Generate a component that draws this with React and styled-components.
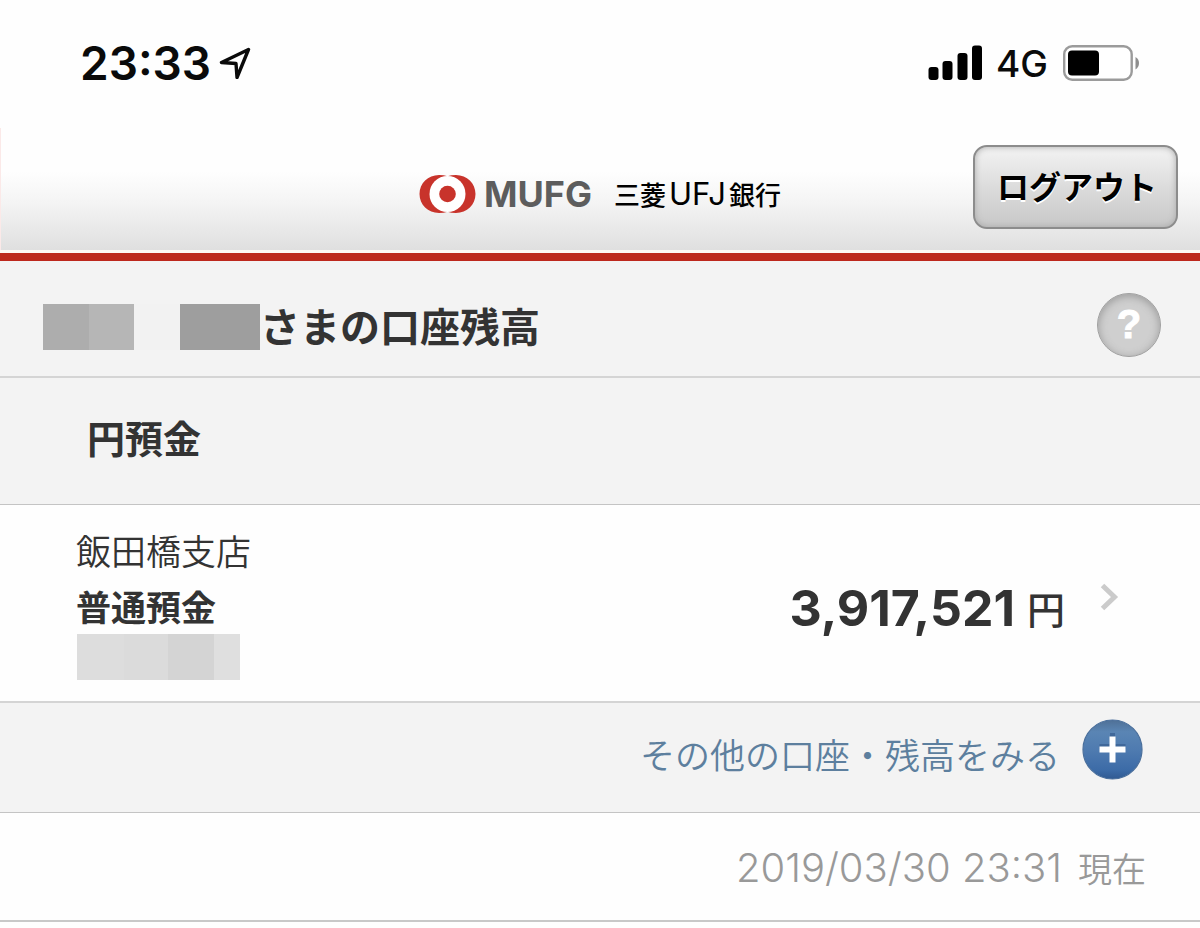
import React from 'react';
import styled, { createGlobalStyle } from 'styled-components';

const App = () => (
  <>
    <GlobalStyle />
    <StatusBar>
      <Clock>
        <Time>23:33</Time>
        <LocationIcon />
      </Clock>
      <Indicators>
        <SignalIcon />
        <Network>4G</Network>
        <BatteryIcon />
      </Indicators>
    </StatusBar>
    <Header>
      <Brand href="#">
        <LogoMark />
        <LogoName>MUFG</LogoName>
        <BankName>
          三菱<Latin>UFJ</Latin>銀行
        </BankName>
      </Brand>
      <LogoutArea>
        <LogoutButton type="button">ログアウト</LogoutButton>
      </LogoutArea>
    </Header>
    <main>
      <TitleRow>
        <Title>
          <MaskedName>
            <Block $width={46} $color="#adadad" />
            <Block $width={45} $color="#b6b6b6" />
            <Block $width={46} $color="#f2f2f2" />
            <Block $width={80} $color="#9e9e9e" />
          </MaskedName>
          さまの口座残高
        </Title>
        <HelpButton type="button" aria-label="ヘルプ">
          ?
        </HelpButton>
      </TitleRow>
      <SectionRow>
        <SectionTitle>円預金</SectionTitle>
      </SectionRow>
      <AccountLink href="#">
        <AccountInfo>
          <Branch>飯田橋支店</Branch>
          <AccountType>普通預金</AccountType>
          <MaskedNumber>
            <Block $width={47} $color="#dddddd" />
            <Block $width={44} $color="#dbdbdb" />
            <Block $width={46} $color="#d4d4d4" />
            <Block $width={26} $color="#dfdfdf" />
          </MaskedNumber>
        </AccountInfo>
        <Balance>
          <Amount>3,917,521</Amount>
          <Unit>円</Unit>
        </Balance>
        <ChevronIcon />
      </AccountLink>
      <MoreRow>
        <MoreLink href="#">
          <MoreLabel>その他の口座・残高をみる</MoreLabel>
          <PlusIcon />
        </MoreLink>
      </MoreRow>
      <DateRow>
        <DateTime>2019/03/30 23:31</DateTime>
        <DateSuffix>現在</DateSuffix>
      </DateRow>
    </main>
  </>
);

export default App;

const LocationIcon = () => (
  <svg width="32" height="32" viewBox="0 0 32 32" aria-hidden="true">
    <path
      d="M29.5 2.5 2.5 15.5 17 16.5 18 30.5Z"
      fill="none"
      stroke="#0a0a0a"
      strokeWidth="3.4"
      strokeLinejoin="round"
    />
  </svg>
);

const SignalIcon = () => (
  <svg width="54" height="36" viewBox="0 0 54 36" aria-hidden="true">
    <rect x="0.5" y="22" width="10" height="13" rx="3" />
    <rect x="14.5" y="16" width="10" height="19" rx="3" />
    <rect x="29.5" y="8" width="10" height="27" rx="3" />
    <rect x="44" y="0.5" width="10" height="34.5" rx="3" />
  </svg>
);

const BatteryIcon = () => (
  <svg width="78" height="36" viewBox="0 0 78 36" aria-hidden="true">
    <rect x="2.2" y="1.2" width="67.5" height="33.5" rx="8" fill="#fff" stroke="#9b9b9b" strokeWidth="2.4" />
    <rect x="6" y="5.5" width="31" height="25" rx="4" fill="#000" />
    <path d="M73.5 12Q77 14 77 18T73.5 24.5Z" fill="#8e8e8e" />
  </svg>
);

const LogoMark = () => (
  <svg width="58" height="40" viewBox="0 0 58 40" aria-hidden="true">
    <path
      d="M20 1Q25 1 28.5 2.2Q32 1 37 1C48 1 56.5 9.5 56.5 20S48 39 37 39Q32 39 28.5 37.8Q25 39 20 39C9 39 0.5 30.5 0.5 20S9 1 20 1Z"
      fill="#c8332b"
    />
    <circle cx="28.5" cy="20" r="18" fill="#fff" />
    <circle cx="28.5" cy="20" r="8.3" fill="#c8332b" />
  </svg>
);

const ChevronIcon = () => (
  <svg width="20" height="36" viewBox="0 0 20 36" aria-hidden="true">
    <path d="M2.5 2.5 14.5 14 2.5 25.5" fill="none" stroke="#cbcbcb" strokeWidth="5" />
  </svg>
);

const PlusIcon = () => (
  <svg width="62" height="62" viewBox="0 0 62 62" aria-hidden="true">
    <defs>
      <linearGradient id="plusFill" x1="0" y1="0" x2="0" y2="1">
        <stop offset="0" stopColor="#4f7096" />
        <stop offset="0.2" stopColor="#5a85b4" />
        <stop offset="0.5" stopColor="#4f7bb0" />
        <stop offset="0.85" stopColor="#3c6ba7" />
        <stop offset="1" stopColor="#305a92" />
      </linearGradient>
    </defs>
    <circle cx="30.5" cy="30.5" r="29.5" fill="url(#plusFill)" stroke="#4a6f9c" strokeWidth="1.2" />
    <path d="M17.5 27.5H43.5M30.5 14V40" stroke="#40689a" strokeWidth="5" />
    <path d="M17.5 30.5H43.5M30.5 17.5V43.5" stroke="#fff" strokeWidth="6" />
  </svg>
);

const GlobalStyle = createGlobalStyle`
  * {
    box-sizing: border-box;
  }

  body {
    margin: 0;
    background-color: #fefefe;
    color: #333;
    font-family: 'Noto Sans CJK JP', sans-serif;
  }
`;

const StatusBar = styled.div`
  display: flex;
  align-items: center;
  justify-content: space-between;
  height: 128px;
  padding: 0 60px 2px 80px;
  color: #0a0a0a;
  font-family: Inter, sans-serif;
`;

const Clock = styled.div`
  display: flex;
  align-items: center;
  gap: 8px;
`;

const Time = styled.span`
  font-size: 46px;
  font-weight: 600;
`;

const Indicators = styled.div`
  display: flex;
  align-items: center;
  gap: 14px;
`;

const Network = styled.span`
  font-size: 37px;
  font-weight: 500;
`;

const Header = styled.header`
  display: grid;
  grid-template-columns: 1fr auto 1fr;
  align-items: center;
  height: 133px;
  padding: 0 22px;
  background: linear-gradient(#fefefe 35%, #f4f4f4 60%, #dedede) padding-box;
  border-bottom: 8px solid #bd281d;
  box-shadow: inset 0 -3px #fdf7f5, inset 1px 0 #fbe9e8;
`;

const Brand = styled.a`
  grid-column: 2;
  display: flex;
  align-items: center;
  padding-top: 6px;
  color: #000;
  text-decoration: none;
`;

const LogoName = styled.span`
  margin: 0 22px 0 7px;
  color: #5d5d5d;
  font-family: Inter, sans-serif;
  font-size: 36px;
  font-weight: 700;
`;

const BankName = styled.span`
  font-size: 26px;
  font-weight: 500;
  line-height: 36px;
`;

const Latin = styled.span`
  padding: 0 3px;
  font-family: Inter, sans-serif;
  font-size: 31px;
  font-weight: 400;
`;

const LogoutArea = styled.div`
  justify-self: end;
  padding-bottom: 8px;
`;

const LogoutButton = styled.button`
  height: 84px;
  padding: 0 19px 4px 22px;
  background: linear-gradient(#f3f3f3, #dcdcdc 50%, #c8c8c8);
  border: 2px solid #8c8c8c;
  border-radius: 14px;
  box-shadow: inset 0 0 6px #a8a8a8;
  color: #000;
  font-family: inherit;
  font-size: 32px;
  font-weight: 700;
  text-shadow: 0 2px #fff;
`;

const Row = styled.div`
  display: flex;
  align-items: center;
  background-color: #f3f3f3;
  border-bottom: 2px solid #d4d4d4;
`;

const TitleRow = styled(Row)`
  justify-content: space-between;
  height: 117px;
  padding: 12px 39px 0 43px;
`;

const Title = styled.h1`
  display: flex;
  align-items: flex-end;
  margin: 0;
  font-size: 40px;
  font-weight: 700;
  line-height: 50px;
`;

const MaskedName = styled.span`
  display: flex;
  height: 46px;
`;

const Block = styled.span`
  width: ${({ $width }) => $width}px;
  background-color: ${({ $color }) => $color};
`;

const HelpButton = styled.button`
  width: 64px;
  height: 64px;
  padding: 0;
  background-color: #cfcfcf;
  border: 1px solid #a0a0a0;
  border-radius: 50%;
  box-shadow: inset 0 2px 8px #999;
  color: #fff;
  font-family: 'Liberation Sans', sans-serif;
  font-size: 40px;
  font-weight: 700;
  -webkit-text-stroke: 1px #fff;
`;

const SectionRow = styled(Row)`
  height: 127px;
  padding: 0 87px 10px;
  border-bottom: 1px solid #c4c4c4;
`;

const SectionTitle = styled.h2`
  margin: 0;
  font-size: 38px;
  font-weight: 700;
`;

const AccountLink = styled.a`
  display: flex;
  align-items: center;
  height: 198px;
  padding: 0 80px 4px 76px;
  background-color: #fefefe;
  border-bottom: 2px solid #d4d4d4;
  color: #333;
  text-decoration: none;
`;

const AccountInfo = styled.div`
  flex: 1;
  font-size: 35px;
  line-height: 56px;
`;

const Branch = styled.div`
  font-weight: 350;
`;

const AccountType = styled.div`
  font-weight: 700;
`;

const MaskedNumber = styled.div`
  display: flex;
  height: 46px;
  margin-left: 1px;
`;

const Balance = styled.div`
  display: flex;
  align-items: center;
  gap: 12px;
  margin-right: 35px;
  padding-top: 13px;
  line-height: 60px;
`;

const Amount = styled.span`
  font-family: Inter, sans-serif;
  font-size: 50px;
  font-weight: 700;
`;

const Unit = styled.span`
  font-size: 38px;
  font-weight: 500;
`;

const MoreRow = styled(Row)`
  justify-content: flex-end;
  height: 110px;
  padding: 0 56px 16px;
  border-bottom: 1px solid #c4c4c4;
`;

const MoreLink = styled.a`
  display: flex;
  align-items: center;
  gap: 22px;
  color: #5d7f9e;
  font-size: 35px;
  font-weight: 350;
  text-decoration: none;
`;

const MoreLabel = styled.span`
  padding-top: 8px;
`;

const DateRow = styled(Row)`
  justify-content: flex-end;
  align-items: baseline;
  gap: 16px;
  height: 109px;
  padding: 30px 54px 0;
  background-color: #fefefe;
  border-bottom: 2px solid #c8c8c8;
  color: #999;
`;

const DateTime = styled.time`
  font-family: Inter, sans-serif;
  font-size: 40px;
  font-weight: 300;
`;

const DateSuffix = styled.span`
  font-size: 34px;
  font-weight: 350;
`;
